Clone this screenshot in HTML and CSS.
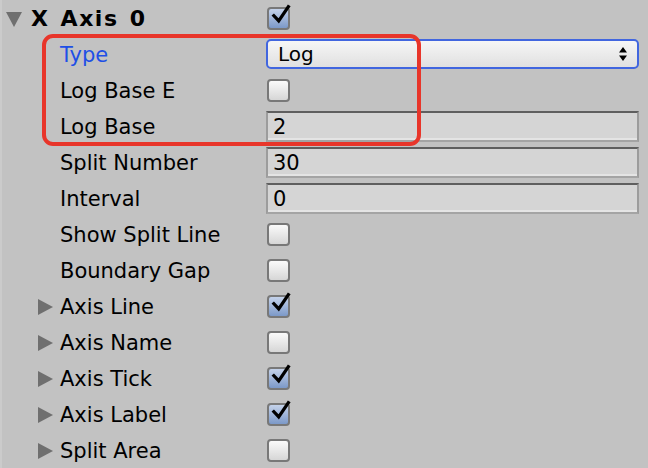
FILE: index.html
```html
<!DOCTYPE html>
<html>
<head>
<meta charset="utf-8">
<link rel="stylesheet" href="styles.css">
</head>
<body>
<div class="panel">
  <div class="row">
    <div class="label l0"><span class="fold down"></span><span class="bold">X Axis 0</span></div>
    <div class="field"><span class="check on"><svg viewBox="0 0 24 24" class="tick"><path d="M3 12 L9.5 19 L21 2" /></svg></span></div>
  </div>
  <div class="row">
    <div class="label l1 blue">Type</div>
    <div class="field"><div class="select"><span>Log</span><svg class="arrows" viewBox="0 0 8 14"><path d="M4 0 L8 5.5 L0 5.5 Z M0 8.5 L8 8.5 L4 14 Z"/></svg></div></div>
  </div>
  <div class="row">
    <div class="label l1">Log Base E</div>
    <div class="field"><span class="check"></span></div>
  </div>
  <div class="row">
    <div class="label l1">Log Base</div>
    <div class="field"><div class="input">2</div></div>
  </div>
  <div class="row">
    <div class="label l1">Split Number</div>
    <div class="field"><div class="input">30</div></div>
  </div>
  <div class="row">
    <div class="label l1">Interval</div>
    <div class="field"><div class="input">0</div></div>
  </div>
  <div class="row">
    <div class="label l1">Show Split Line</div>
    <div class="field"><span class="check"></span></div>
  </div>
  <div class="row">
    <div class="label l1">Boundary Gap</div>
    <div class="field"><span class="check"></span></div>
  </div>
  <div class="row">
    <div class="label l1f"><span class="fold right"></span>Axis Line</div>
    <div class="field"><span class="check on"><svg viewBox="0 0 24 24" class="tick"><path d="M3 12 L9.5 19 L21 2" /></svg></span></div>
  </div>
  <div class="row">
    <div class="label l1f"><span class="fold right"></span>Axis Name</div>
    <div class="field"><span class="check"></span></div>
  </div>
  <div class="row">
    <div class="label l1f"><span class="fold right"></span>Axis Tick</div>
    <div class="field"><span class="check on"><svg viewBox="0 0 24 24" class="tick"><path d="M3 12 L9.5 19 L21 2" /></svg></span></div>
  </div>
  <div class="row">
    <div class="label l1f"><span class="fold right"></span>Axis Label</div>
    <div class="field"><span class="check on"><svg viewBox="0 0 24 24" class="tick"><path d="M3 12 L9.5 19 L21 2" /></svg></span></div>
  </div>
  <div class="row">
    <div class="label l1f"><span class="fold right"></span>Split Area</div>
    <div class="field"><span class="check"></span></div>
  </div>
  <div class="highlight"></div>
</div>
</body>
</html>
```

FILE: styles.css
```css
html, body {
  margin: 0;
  padding: 0;
  background: #c2c2c2;
}
.panel {
  position: relative;
  width: 648px;
  height: 468px;
  overflow: hidden;
  box-sizing: border-box;
  border-left: 2px solid #cbcbcb;
  font-family: "DejaVu Sans", "Liberation Sans", sans-serif;
  font-size: 21px;
  color: #000;
}
.row {
  display: flex;
  align-items: center;
  height: 36px;
}
.label {
  width: 264px;
  box-sizing: border-box;
  display: flex;
  align-items: center;
  white-space: nowrap;
  padding-top: 1px;
}
.l0 { padding-left: 4px; }
.l1 { padding-left: 58px; }
.l1f { padding-left: 36px; }
.blue { color: #1e4fe6; }
.bold {
  font-weight: bold;
  font-size: 22px;
  letter-spacing: 1.5px;
  word-spacing: 2px;
}
.fold {
  display: inline-block;
  width: 0;
  height: 0;
}
.fold.down {
  border-left: 8px solid transparent;
  border-right: 8px solid transparent;
  border-top: 15px solid #6f6f6f;
  margin-right: 9px;
  margin-top: 2px;
}
.fold.right {
  border-top: 8px solid transparent;
  border-bottom: 8px solid transparent;
  border-left: 15px solid #6f6f6f;
  margin-right: 7px;
}
.field {
  flex: 1;
  display: flex;
  align-items: center;
  padding-right: 9px;
}
.check {
  position: relative;
  display: inline-block;
  width: 23px;
  height: 23px;
  box-sizing: border-box;
  margin-left: 1px;
  border: 2px solid #787878;
  border-radius: 4px;
  background: linear-gradient(#fafafa, #d6d6d6);
}
.check.on {
  background: linear-gradient(#c4d2ea, #7c99c8);
}
.tick {
  position: absolute;
  left: 1px;
  top: -7px;
  width: 22px;
  height: 25px;
  overflow: visible;
}
.tick path {
  fill: none;
  stroke: #000;
  stroke-width: 3.6;
  stroke-linecap: butt;
  stroke-linejoin: miter;
}
.select {
  flex: 1;
  height: 30px;
  box-sizing: border-box;
  border: 2px solid #4166df;
  border-radius: 5px;
  background: linear-gradient(#f6f6f6, #e0e0e0);
  display: flex;
  align-items: center;
  justify-content: space-between;
  padding: 0 10px 0 10px;
  font-size: 20px;
}
.arrows {
  width: 8px;
  height: 14px;
  fill: #000;
}
.input {
  flex: 1;
  height: 31px;
  box-sizing: border-box;
  border-top: 2px solid #5f5f5f;
  border-left: 2px solid #9c9c9c;
  border-right: 2px solid #9c9c9c;
  border-bottom: 2px solid #a4a4a4;
  background: #d5d5d5;
  box-shadow: inset 0 -2px 0 #e4e4e4;
  display: flex;
  align-items: center;
  padding-left: 5px;
  padding-top: 1px;
}
.highlight {
  position: absolute;
  left: 40px;
  top: 34px;
  width: 379px;
  height: 112px;
  box-sizing: border-box;
  border: 4px solid #e8352a;
  border-radius: 11px;
  pointer-events: none;
}
```
